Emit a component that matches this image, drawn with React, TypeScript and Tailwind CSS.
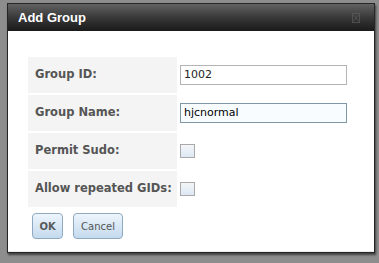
import React from "react";

const rows: { label: string; kind: "text" | "check"; value?: string; focused?: boolean }[] = [
  { label: "Group ID:", kind: "text", value: "1002" },
  { label: "Group Name:", kind: "text", value: "hjcnormal", focused: true },
  { label: "Permit Sudo:", kind: "check" },
  { label: "Allow repeated GIDs:", kind: "check" },
];

function CloseIcon() {
  return (
    <svg width="8" height="10" viewBox="0 0 8 10" className="opacity-70">
      <rect x="0.5" y="0.5" width="7" height="9" fill="none" stroke="#5e5e5e" />
      <path d="M1.5 2 L6.5 8 M6.5 2 L1.5 8" stroke="#5e5e5e" strokeWidth="1" />
    </svg>
  );
}

export default function App() {
  return (
    <div
      className="w-[379px] h-[263px] overflow-hidden bg-[#8d8d8d] pl-[7px] pt-[3px]"
      style={{ fontFamily: '"DejaVu Sans", Verdana, sans-serif' }}
    >
      <div className="w-[368px] border border-[#262626] bg-white shadow-[1px_2px_2px_rgba(0,0,0,0.55)]">
        {/* Title bar */}
        <div className="flex h-[27px] items-center justify-between bg-gradient-to-b from-[#626262] via-[#393939] to-[#1a1a1a] pl-[10px] pr-[14px]">
          <span
            className="text-[13px] font-bold text-white"
            style={{ fontFamily: '"Liberation Sans", Arial, sans-serif' }}
          >
            Add Group
          </span>
          <CloseIcon />
        </div>

        {/* Body */}
        <div className="border-b border-[#ececec] pl-[20px] pt-[26px] pb-[12px]">
          <div className="grid grid-cols-[149px_auto] gap-[2px]">
            {rows.map((r) => (
              <React.Fragment key={r.label}>
                <div className="flex h-[36px] items-center bg-[#f4f4f4] pl-[7px] text-[11.5px] font-bold text-[#555]">
                  {r.label}
                </div>
                <div className="flex h-[36px] items-center pl-[1px]">
                  {r.kind === "text" ? (
                    <div
                      className={
                        r.focused
                          ? "flex h-[20px] w-[167px] items-center border border-[#7f98a8] bg-[#f8fcff] pl-[3px] text-[11px] text-black"
                          : "flex h-[20px] w-[167px] items-center border border-[#b4b4b4] bg-white pl-[3px] text-[11px] text-[#222]"
                      }
                    >
                      {r.value}
                    </div>
                  ) : (
                    <div className="h-[14px] w-[15px] border border-[#a9a9a9] bg-gradient-to-b from-[#f4f6f8] to-[#dde8f4]" />
                  )}
                </div>
              </React.Fragment>
            ))}
          </div>

          <div className="mt-[6px] flex gap-[10px] pl-[4px]">
            <div className="flex h-[26px] w-[31px] items-center justify-center rounded-[4px] border border-[#8fa9c0] bg-gradient-to-b from-[#eef5fc] to-[#c4daee] text-[10px] font-bold text-[#5a5a5a]">
              OK
            </div>
            <div className="flex h-[26px] w-[50px] items-center justify-center rounded-[4px] border border-[#8fa9c0] bg-gradient-to-b from-[#eef5fc] to-[#c4daee] text-[10px] text-[#555]">
              Cancel
            </div>
          </div>
        </div>
      </div>
    </div>
  );
}
